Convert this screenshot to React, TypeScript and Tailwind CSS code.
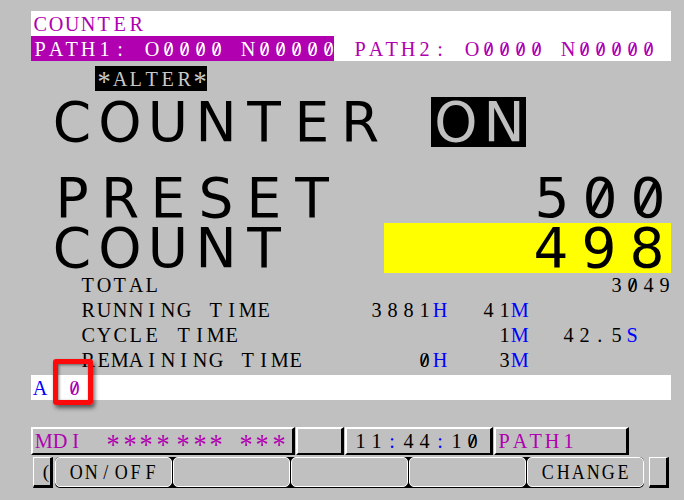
import React from "react";

type CellsProps = {
  text: string;
  cell?: string;
  glyph?: string;
  color?: string;
  big?: boolean;
  slash?: string;
};

function Zero({ big, slash }: { big: boolean; slash: string }) {
  if (big) {
    return (
      <span className="relative inline-block">
        0
        <svg className="absolute left-0 top-0" width="35" height="55" viewBox="0 0 35 55">
          <line x1="8" y1="43" x2="25" y2="11" stroke={slash} strokeWidth="4.5" />
        </svg>
      </span>
    );
  }
  return (
    <span className="relative inline-block">
      0
      <svg className="absolute left-0 top-0" width="11" height="22" viewBox="0 0 11 22">
        <line x1="2.5" y1="17" x2="8.5" y2="5" stroke={slash} strokeWidth="1.8" />
      </svg>
    </span>
  );
}

function Cells({
  text,
  cell = "w-4",
  glyph = "scale-x-[0.92]",
  color = "",
  big = false,
  slash = "#000000",
}: CellsProps) {
  return (
    <span className={`inline-flex items-center ${color}`}>
      {Array.from(text).map((ch, i) => (
        <span key={i} className={`inline-flex shrink-0 justify-center ${cell}`}>
          <span
            className={`inline-block leading-none ${glyph} ${
              ch === "*" ? "translate-y-[4px] text-[1.3em]" : ""
            }`}
          >
            {ch === "0" ? <Zero big={big} slash={slash} /> : ch === " " ? "\u00a0" : ch}
          </span>
        </span>
      ))}
    </span>
  );
}

const BLUE = "text-[#0000ff]";
const PURPLE = "#b000b0";

type Seg = [string, string?];

const dataRows: Seg[][] = [
  [["TOTAL".padEnd(33) + "3049"]],
  [["RUNNING TIME".padEnd(18) + "3881"], ["H", BLUE], ["  41"], ["M", BLUE]],
  [["CYCLE TIME".padEnd(26) + "1"], ["M", BLUE], ["  42.5"], ["S", BLUE]],
  [["REMAINING TIME".padEnd(21) + "0"], ["H", BLUE], ["   3"], ["M", BLUE]],
];

function SoftKey({ label }: { label?: string }) {
  return (
    <div className="flex h-[30px] w-[117px] items-center justify-center rounded-[5px] border border-white bg-[#c0c0c0] text-[20px]">
      {label && <Cells text={label} cell="w-[15px]" glyph="scale-x-[0.9]" />}
    </div>
  );
}

export default function App() {
  return (
    <div className="relative h-[500px] w-[684px] overflow-hidden bg-[#c0c0c0] font-['Liberation_Serif','Times_New_Roman',serif] text-[22px] text-black">
      <div className="flex flex-col">
        <div className="ml-[31px] mt-[11px] w-[640px] bg-white">
          <div className="flex h-[25px] items-center pl-[1px]">
            <Cells text="COUNTER" color="text-[#b000b0]" />
          </div>
          <div className="flex h-[25px] items-center">
            <div className="flex h-full w-[303px] items-center bg-[#b000b0] pl-[1px]">
              <Cells text="PATH1: O0000 N00000" color="text-white" slash="#ffffff" />
            </div>
            <div className="ml-[18px] flex items-center">
              <Cells text="PATH2: O0000 N00000" color="text-[#b000b0]" slash={PURPLE} />
            </div>
          </div>
        </div>

        <div className="mt-[5px] flex h-[25px]">
          <div className="ml-[95px] flex w-[112px] items-center bg-black pl-[1px]">
            <Cells text="*ALTER*" color="text-[#c8c8c8]" />
          </div>
        </div>

        <div className="mt-[6px] flex h-[50px] items-center pl-[48px] font-['DejaVu_Sans',sans-serif] text-[55px]">
          <Cells text="COUNTER" cell="w-12" glyph="scale-x-100" big />
          <div className="ml-[47px] flex h-[50px] w-[95px] items-center bg-black pl-[1px] text-[#c0c0c0]">
            <Cells text="ON" cell="w-12" glyph="scale-x-100" big />
          </div>
        </div>

        <div className="mt-[26px] flex h-[50px] items-center justify-between pl-[48px] pr-[12px] font-['DejaVu_Sans',sans-serif] text-[55px]">
          <Cells text="PRESET" cell="w-12" glyph="scale-x-100" big />
          <Cells text="500" cell="w-12" glyph="scale-x-100" big />
        </div>

        <div className="flex h-[50px] items-center pl-[48px] pr-[13px] font-['DejaVu_Sans',sans-serif] text-[55px]">
          <Cells text="COUNT" cell="w-12" glyph="scale-x-100" big />
          <div className="ml-auto flex h-full w-[287px] items-center justify-end bg-[#ffff00]">
            <Cells text="498" cell="w-12" glyph="scale-x-100" big />
          </div>
        </div>

        <div className="flex flex-col pl-[80px]">
          {dataRows.map((segs, r) => (
            <div key={r} className="flex h-[24.75px] items-center">
              {segs.map(([t, c], i) => (
                <Cells key={i} text={t} color={c ?? ""} />
              ))}
            </div>
          ))}
        </div>

        <div className="ml-[31px] mt-[3px] flex h-[25px] w-[640px] items-center bg-white pl-[1px]">
          <Cells text="A" color={BLUE} />
          <span className="ml-[18px] inline-flex">
            <Cells text="0" color="text-[#b000b0]" slash={PURPLE} />
          </span>
        </div>

        <div className="ml-[31px] mt-[27px] flex h-[28px]">
          <div className="flex w-[264px] items-center border-b-2 border-l-2 border-r-[3px] border-t-2 border-b-black border-l-white border-r-black border-t-white pl-[3px] text-[#b000b0]">
            <Cells text="MDI" />
            <span className="ml-[21px] inline-flex">
              <Cells text="****" cell="w-[16.5px]" />
            </span>
            <span className="ml-[4px] inline-flex">
              <Cells text="***" cell="w-[16.5px]" />
            </span>
            <span className="ml-[13px] inline-flex">
              <Cells text="***" cell="w-[16.5px]" />
            </span>
          </div>
          <div className="ml-[1px] w-[48px] border-b-2 border-l-2 border-r-[3px] border-t-2 border-b-black border-l-white border-r-black border-t-white" />
          <div className="ml-[1px] flex w-[148px] items-center border-b-2 border-l-2 border-r-[3px] border-t-2 border-b-black border-l-white border-r-black border-t-white pl-[5px]">
            <Cells text="11" />
            <Cells text=":" color={BLUE} />
            <Cells text="44" />
            <Cells text=":" color={BLUE} />
            <Cells text="10" />
          </div>
          <div className="ml-[1px] flex w-[135px] items-center border-b-2 border-l-2 border-r-[3px] border-t-2 border-b-black border-l-white border-r-black border-t-white text-[#b000b0]">
            <Cells text="PATH1" />
          </div>
        </div>

        <div className="mt-[2px] flex h-[31px] items-start">
          <div className="ml-[33px] flex h-[31px] w-[20px] items-center justify-end border-b-[3px] border-l border-r-[3px] border-t border-b-black border-l-white border-r-black border-t-white pr-[1px] text-[19px]">
            <span className="leading-none">(</span>
          </div>
          <div className="ml-[2px] flex h-[31px] w-[589px] items-start gap-[1px] rounded-[5px] bg-black">
            <SoftKey label="ON/OFF" />
            <SoftKey />
            <SoftKey />
            <SoftKey />
            <SoftKey label="CHANGE" />
          </div>
          <div className="ml-[5px] h-[31px] w-[20px] border-b-[3px] border-l border-r-[3px] border-t border-b-black border-l-white border-r-black border-t-white" />
        </div>
      </div>

      <div className="pointer-events-none absolute left-[53px] top-[359px] h-[46px] w-[40px] rounded-[3px] border-[5px] border-[#ff0a0a] shadow-[2px_3px_4px_rgba(0,0,0,0.55),inset_1px_1px_3px_rgba(0,0,0,0.5)]" />
    </div>
  );
}
